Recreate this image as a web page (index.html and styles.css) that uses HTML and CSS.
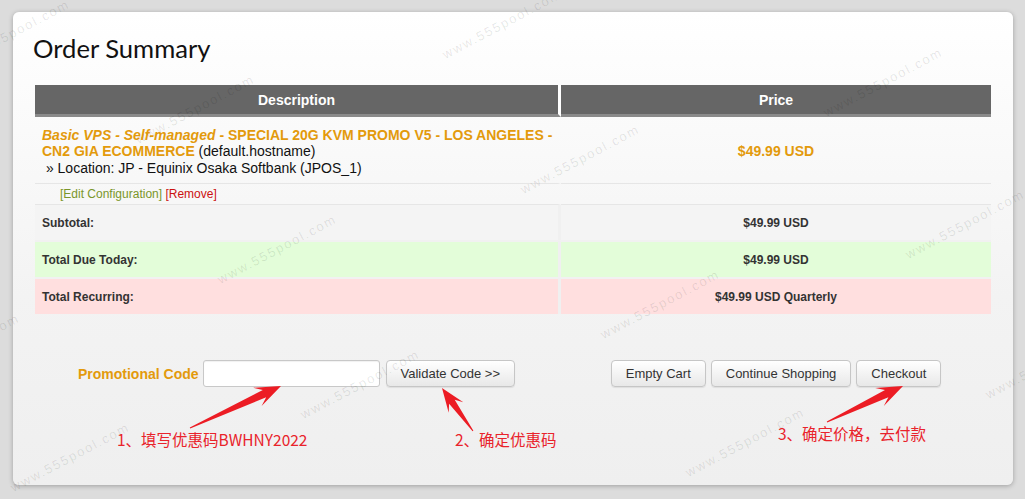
FILE: index.html
```html
<!DOCTYPE html>
<html lang="en">
<head>
<meta charset="utf-8">
<title>Order Summary</title>
<link rel="stylesheet" href="styles.css">
</head>
<body>
<div class="page">
  <div class="card">
    <h1 class="title">Order Summary</h1>
    <table class="cart">
      <colgroup><col class="c1"><col class="c2"></colgroup>
      <thead>
        <tr><th class="col-desc">Description</th><th class="col-price">Price</th></tr>
      </thead>
      <tbody>
        <tr class="item">
          <td class="item-desc"><span class="prod"><em>Basic VPS - Self-managed</em> - SPECIAL 20G KVM PROMO V5 - LOS ANGELES - CN2 GIA ECOMMERCE</span> (default.hostname)<br><span class="loc">&nbsp;» Location: JP - Equinix Osaka Softbank (JPOS_1)</span></td>
          <td class="item-price">$49.99 USD</td>
        </tr>
        <tr class="actions">
          <td><a class="edit">[Edit Configuration]</a> <a class="remove">[Remove]</a></td>
          <td></td>
        </tr>
        <tr class="total subtotal"><td>Subtotal:</td><td class="amt">$49.99 USD</td></tr>
        <tr class="total due"><td>Total Due Today:</td><td class="amt">$49.99 USD</td></tr>
        <tr class="total recurring"><td>Total Recurring:</td><td class="amt">$49.99 USD Quarterly</td></tr>
      </tbody>
    </table>
    <div class="bottom">
      <div class="promo">
        <label class="promo-label">Promotional Code</label>
        <input class="promo-input" type="text">
        <button class="btn validate">Validate Code &gt;&gt;</button>
      </div>
      <div class="cart-btns">
        <button class="btn">Empty Cart</button>
        <button class="btn">Continue Shopping</button>
        <button class="btn">Checkout</button>
      </div>
    </div>
  </div>

  <svg class="arrows" width="1025" height="499" viewBox="0 0 1025 499">
    <polygon points="190.2,428.5 266.2,397.2 261.6,406 281,386 253.2,387.8 262.8,390 189.8,427.5"/>
    <polygon points="473.4,430.7 454.7,399.8 463.3,402.2 442,388 448.7,412.8 449.1,403.8 472.6,431.3"/>
    <polygon points="827.2,422.5 888.4,397.3 883.8,406.1 903,386 875.2,388.1 885,390.1 826.8,421.5"/>
  </svg>
  <span class="note n1">1、填写优惠码BWHNY2022</span>
  <span class="note n2">2、确定优惠码</span>
  <span class="note n3">3、确定价格，去付款</span>

  <div class="wm" style="left:447px;top:48px">www.555pool.com</div>
  <div class="wm" style="left:140px;top:133px">www.555pool.com</div>
  <div class="wm" style="left:525px;top:183px">www.555pool.com</div>
  <div class="wm" style="left:828px;top:106px">www.555pool.com</div>
  <div class="wm" style="left:910px;top:248px">www.555pool.com</div>
  <div class="wm" style="left:222px;top:273px">www.555pool.com</div>
  <div class="wm" style="left:-95px;top:372px">www.555pool.com</div>
  <div class="wm" style="left:605px;top:328px">www.555pool.com</div>
  <div class="wm" style="left:305px;top:408px">www.555pool.com</div>
  <div class="wm" style="left:990px;top:388px">www.555pool.com</div>
  <div class="wm" style="left:690px;top:466px">www.555pool.com</div>
  <div class="wm" style="left:15px;top:481px">www.555pool.com</div>
  <div class="wm" style="left:-45px;top:58px">www.555pool.com</div>
</div>
</body>
</html>
```

FILE: styles.css
```css
html, body {
  margin: 0;
  padding: 0;
  background: #dcdcdc;
}
body {
  font-family: "Liberation Sans", Arial, sans-serif;
  color: #333;
  overflow: hidden;
}
.page {
  position: relative;
  width: 1025px;
  height: 499px;
  padding: 12px 12px 0 13px;
  box-sizing: border-box;
  overflow: hidden;
}
.card {
  width: 1000px;
  height: 473px;
  box-sizing: border-box;
  padding: 18px 22px 0 20px;
  border-radius: 6px;
  background: linear-gradient(#ffffff 0%, #f3f3f3 60%, #efefef 100%);
  box-shadow: 0 1px 5px rgba(0,0,0,0.28);
}
.title {
  margin: 0 0 19px 0;
  font-family: Lato, "Open Sans", sans-serif;
  font-weight: 400;
  font-size: 25.6px;
  line-height: 36px;
  color: #111;
}
.cart {
  width: 956px;
  margin-left: 2px;
  table-layout: fixed;
  border-collapse: separate;
  border-spacing: 0;
  font-size: 14px;
}
.cart .c1 { width: 526px; }
.cart .c2 { width: 430px; }
.cart th {
  height: 29px;
  padding: 0;
  background: #666;
  border-bottom: 3px solid #8a8a8a;
  color: #fff;
  font-weight: bold;
  font-size: 14px;
  text-align: center;
}
.cart .col-desc {
  border-right: 3px solid #fff;
}
.cart td {
  padding: 0;
  vertical-align: middle;
}
.item td {
  height: 63px;
  border-bottom: 1px solid #e6e6e6;
}
.item-desc {
  padding: 3px 2px 0 7px !important;
  line-height: 16.5px;
  color: #111;
  border-right: 3px solid transparent;
}
.item-price {
  padding-top: 2px !important;
  text-align: center;
  color: #e39a0c;
  font-weight: bold;
}
.prod {
  color: #e39a0c;
  font-weight: bold;
}
.prod em {
  font-style: italic;
}
.loc {
  color: #111;
}
.actions td {
  height: 20px;
  font-size: 12px;
  border-bottom: 1px solid #e6e6e6;
}
.actions td:first-child {
  padding-left: 25px;
  border-right: 3px solid transparent;
}
.edit { color: #7a962a; }
.remove { color: #cc1111; }
.total td {
  height: 35px;
  font-size: 12px;
  font-weight: bold;
  color: #333;
  background: #f4f4f4;
}
.total td:first-child {
  padding-left: 7px;
  border-right: 3px solid #f0f0f0;
}
.total .amt {
  text-align: center;
}
.due td, .recurring td {
  border-top: 2px solid #f1f1f1;
}
.due td { background: #e3fdd9; }
.recurring td { background: #ffdfdf; }

.bottom {
  display: grid;
  grid-template-columns: 523px 430px;
  column-gap: 3px;
  margin: 46px 0 0 2px;
  width: 956px;
}
.promo, .cart-btns {
  display: flex;
  align-items: center;
  justify-content: center;
}
.promo-label {
  color: #e39a0c;
  font-weight: bold;
  font-size: 14px;
}
.promo-input {
  width: 177px;
  height: 27px;
  box-sizing: border-box;
  margin: 0 0 0 4px;
  border: 1px solid #c8c8c8;
  border-radius: 3px;
  background: #fff;
  box-shadow: inset 0 1px 1px rgba(0,0,0,0.06);
}
.btn {
  height: 27px;
  box-sizing: border-box;
  padding: 0 14px;
  margin: 0;
  border: 1px solid #c6c6c6;
  border-radius: 4px;
  background: linear-gradient(#ffffff, #e8e8e8);
  box-shadow: 0 1px 1px rgba(0,0,0,0.08);
  font-family: "Liberation Sans", Arial, sans-serif;
  font-size: 13px;
  color: #333;
}
.validate {
  margin-left: 6px;
}
.cart-btns {
  gap: 5px;
}

.arrows {
  position: absolute;
  left: 0;
  top: 0;
  pointer-events: none;
}
.arrows polygon {
  fill: #ec1c24;
}
.note {
  position: absolute;
  font-family: "Noto Sans CJK SC", sans-serif;
  font-size: 15.5px;
  line-height: 20px;
  color: #e9232b;
  white-space: nowrap;
}
.n1 { left: 117px; top: 429px; }
.n2 { left: 455px; top: 429px; }
.n3 { left: 778px; top: 423px; }

.wm {
  position: absolute;
  font-family: "Liberation Sans", Arial, sans-serif;
  font-size: 13px;
  line-height: 14px;
  letter-spacing: 1.8px;
  color: rgba(0,0,0,0.1);
  white-space: nowrap;
  transform: rotate(-28deg);
  transform-origin: left bottom;
  pointer-events: none;
}
```
